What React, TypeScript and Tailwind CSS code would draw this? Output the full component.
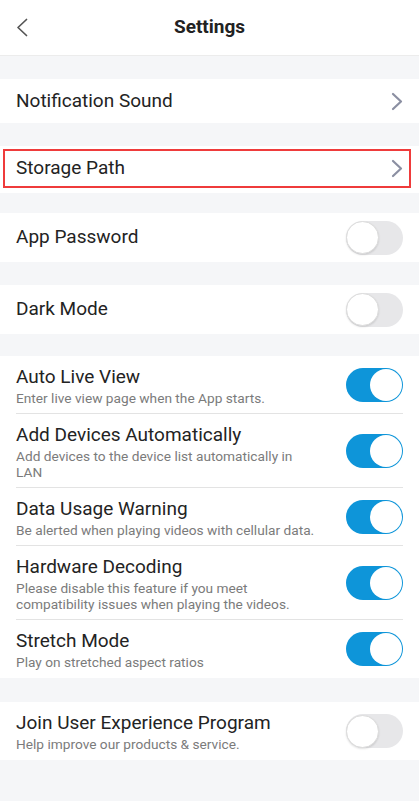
import React from "react";

const font = { fontFamily: "Roboto, 'Noto Sans', Arial, sans-serif" };

const Chevron = () => (
  <svg width="12" height="19" viewBox="0 0 12 19" className="shrink-0">
    <path d="M2 2l8 7.5L2 17" stroke="#8b8fa2" strokeWidth="2.2" fill="none" strokeLinecap="round" strokeLinejoin="round" />
  </svg>
);

const Toggle = ({ on }: { on: boolean }) =>
  on ? (
    <div className="w-[57px] h-[34px] rounded-full bg-[#0e95d9] flex items-center justify-end pr-[1px] shrink-0">
      <div className="w-[32px] h-[32px] rounded-full bg-white" />
    </div>
  ) : (
    <div className="w-[57px] h-[34px] rounded-full bg-[#e7e7e9] flex items-center shrink-0">
      <div className="w-[33px] h-[33px] rounded-full bg-white border border-[#dcdcdc] shadow-[0_1px_2px_rgba(0,0,0,0.12)]" />
    </div>
  );

const SimpleRow = ({ label, h, chevron, toggle }: { label: string; h: string; chevron?: boolean; toggle?: boolean }) => (
  <div className={`bg-white flex items-center justify-between pl-4 pr-4 ${h}`}>
    <span className="text-[19px] text-[#232323]">{label}</span>
    {chevron && <Chevron />}
    {toggle !== undefined && <Toggle on={toggle} />}
  </div>
);

const DetailRow = ({ title, sub, on, last }: { title: string; sub: string; on: boolean; last?: boolean }) => (
  <div className={`flex items-center justify-between pt-2 ${last ? "pb-2" : "pb-[7px] border-b border-[#e3e3e3]"}`}>
    <div className="flex-1 mr-[26px]">
      <div className="text-[19px] leading-[26px] text-[#232323]">{title}</div>
      <div className="text-[13.7px] leading-[16px] text-[#7b7b7b]">{sub}</div>
    </div>
    <Toggle on={on} />
  </div>
);

export default function App() {
  return (
    <div className="w-[419px] min-h-[801px] bg-[#f5f6f8]" style={font}>
      <div className="h-[56px] bg-white border-b border-[#ececec] flex items-center relative">
        <div className="pl-[16px]">
          <svg width="12" height="19" viewBox="0 0 12 19">
            <path d="M10.5 1.5L2 9.5l8.5 8" stroke="#555" strokeWidth="1.7" fill="none" strokeLinecap="round" strokeLinejoin="round" />
          </svg>
        </div>
        <div className="absolute inset-0 flex items-center justify-center text-[19px] font-bold text-[#222] pointer-events-none">
          Settings
        </div>
      </div>

      <div className="h-[23px]" />
      <SimpleRow label="Notification Sound" h="h-[44px]" chevron />

      <div className="h-[23px]" />
      <div className="bg-white h-[47px] pl-[3px] pr-[8px] pt-[3px]">
        <div className="h-[39px] border-2 border-[#ef3b3b] flex items-center justify-between pl-[11px] pr-[6px]">
          <span className="text-[19px] text-[#232323]">Storage Path</span>
          <Chevron />
        </div>
      </div>

      <div className="h-[20px]" />
      <SimpleRow label="App Password" h="h-[49px]" toggle={false} />

      <div className="h-[23px]" />
      <SimpleRow label="Dark Mode" h="h-[49px]" toggle={false} />

      <div className="h-[22px]" />
      <div className="bg-white px-4">
        <DetailRow title="Auto Live View" sub="Enter live view page when the App starts." on />
        <DetailRow title="Add Devices Automatically" sub="Add devices to the device list automatically in LAN" on />
        <DetailRow title="Data Usage Warning" sub="Be alerted when playing videos with cellular data." on />
        <DetailRow title="Hardware Decoding" sub="Please disable this feature if you meet compatibility issues when playing the videos." on />
        <DetailRow title="Stretch Mode" sub="Play on stretched aspect ratios" on last />
      </div>

      <div className="h-[24px]" />
      <div className="bg-white px-4">
        <DetailRow title="Join User Experience Program" sub="Help improve our products & service." on={false} last />
      </div>
    </div>
  );
}
